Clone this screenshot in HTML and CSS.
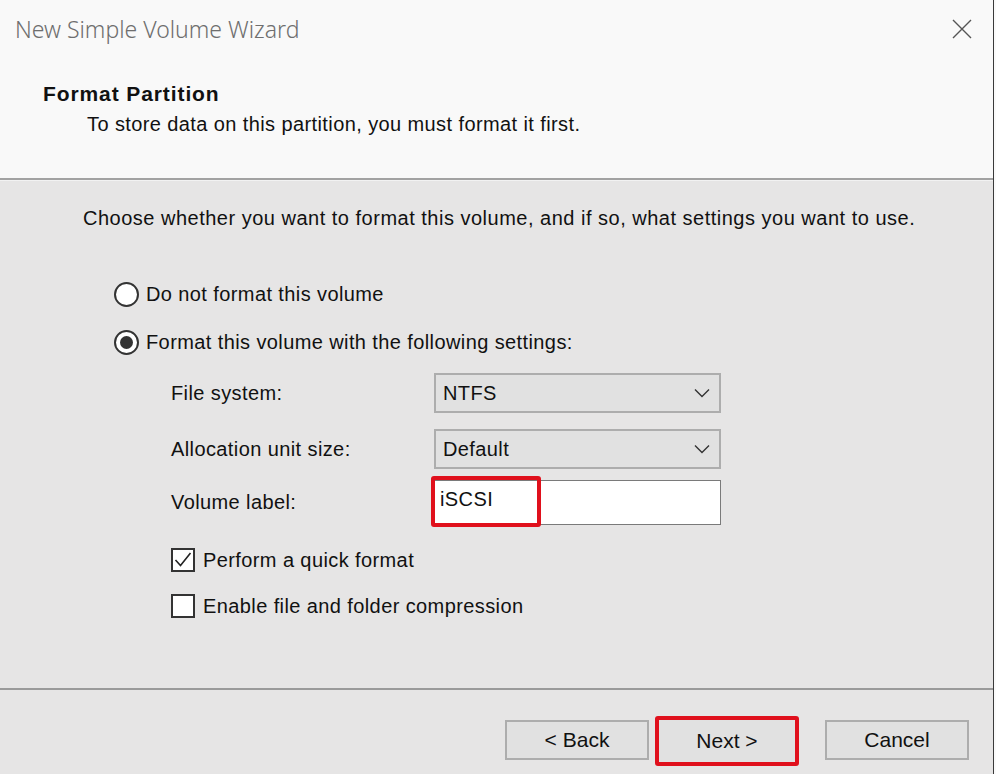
FILE: index.html
```html
<!DOCTYPE html>
<html lang="en">
  <head>
    <meta charset="UTF-8" />
    <title>New Simple Volume Wizard</title>
    <link rel="stylesheet" href="styles.css">
  </head>
  <body>
    <div class="window">
      <div class="header">
        <div class="titlebar">
          <span class="title">New Simple Volume Wizard</span>
          <svg class="close" width="20" height="20" viewBox="0 0 20 20">
            <path d="M1 1 L19 19 M19 1 L1 19" stroke="#555" stroke-width="1.4" fill="none" />
          </svg>
        </div>
        <h2 class="page-title">Format Partition</h2>
        <p class="page-desc">To store data on this partition, you must format it first.</p>
      </div>

      <div class="content">
        <p class="intro">Choose whether you want to format this volume, and if so, what settings you want to use.</p>

        <div class="option">
          <span class="radio"></span>
          <span>Do not format this volume</span>
        </div>
        <div class="option">
          <span class="radio checked"></span>
          <span>Format this volume with the following settings:</span>
        </div>

        <div class="settings">
          <div class="field">
            <span class="label">File system:</span>
            <div class="select">
              <span>NTFS</span>
              <svg width="16" height="10" viewBox="0 0 16 10">
                <polyline points="1,1.5 8,8.5 15,1.5" stroke="#333" stroke-width="1.4" fill="none" />
              </svg>
            </div>
          </div>
          <div class="field">
            <span class="label">Allocation unit size:</span>
            <div class="select">
              <span>Default</span>
              <svg width="16" height="10" viewBox="0 0 16 10">
                <polyline points="1,1.5 8,8.5 15,1.5" stroke="#333" stroke-width="1.4" fill="none" />
              </svg>
            </div>
          </div>
          <div class="field field-label">
            <span class="label">Volume label:</span>
            <div class="textbox">
              <span>iSCSI</span>
              <span class="mark"></span>
            </div>
          </div>

          <div class="check-row">
            <span class="checkbox">
              <svg width="20" height="20" viewBox="0 0 20 20">
                <polyline points="2.5,10 7.5,15.5 17.5,3" stroke="#222" stroke-width="1.6" fill="none" />
              </svg>
            </span>
            <span>Perform a quick format</span>
          </div>
          <div class="check-row">
            <span class="checkbox"></span>
            <span>Enable file and folder compression</span>
          </div>
        </div>
      </div>

      <div class="footer">
        <button class="btn">&lt; Back</button>
        <span class="btn-mark"><button class="btn btn-next">Next &gt;</button></span>
        <button class="btn btn-cancel">Cancel</button>
      </div>
    </div>
  </body>
</html>
```

FILE: styles.css
```css
* {
  margin: 0;
  padding: 0;
  box-sizing: border-box;
}
body {
  width: 996px;
  height: 774px;
  overflow: hidden;
  background: #fafafa;
  font-family: 'Liberation Sans', Arial, sans-serif;
  color: #111;
}
.window {
  width: 994px;
  height: 774px;
  border-right: 1px solid #3a3a3a;
  background: #e6e5e5;
}
.header {
  height: 180px;
  background: #f9f9f9;
  border-bottom: 2px solid #a2a2a2;
}
.titlebar {
  display: flex;
  justify-content: space-between;
  align-items: center;
  height: 58px;
  padding: 0 21px 0 15px;
}
.title {
  font-family: 'Noto Sans', 'Open Sans', sans-serif;
  font-weight: 300;
  font-size: 23px;
  color: #6e6e6e;
}
.page-title {
  margin: 22px 0 0 43px;
  font-size: 21px;
  font-weight: bold;
  letter-spacing: 0.9px;
  line-height: 28px;
  color: #111;
}
.page-desc {
  margin: 3px 0 0 87px;
  font-size: 20px;
  letter-spacing: 0.4px;
  line-height: 26px;
}
.content {
  height: 508px;
  padding: 25px 0 0 83px;
  border-top: 1px solid #f2f2f2;
  font-size: 20px;
  letter-spacing: 0.4px;
}
.intro {
  line-height: 24px;
  margin-bottom: 40px;
  letter-spacing: 0.5px;
}
.option {
  display: flex;
  align-items: center;
  gap: 7px;
  height: 48px;
  margin-left: 31px;
}
.radio {
  width: 25px;
  height: 25px;
  border: 2px solid #333;
  border-radius: 50%;
  background: #fff;
  display: flex;
  align-items: center;
  justify-content: center;
}
.radio.checked::after {
  content: '';
  width: 13px;
  height: 13px;
  border-radius: 50%;
  background: #333;
}
.settings {
  margin: 7px 0 0 88px;
}
.field {
  display: flex;
  align-items: center;
  height: 40px;
  margin-bottom: 16px;
}
.field-label {
  height: 45px;
  margin-top: -5px;
  margin-bottom: 23px;
}
.label {
  width: 263px;
}
.select {
  width: 287px;
  height: 40px;
  display: flex;
  align-items: center;
  justify-content: space-between;
  padding: 0 9px 0 7px;
  background: #e1e1e1;
  border: 2px solid #adadad;
}
.textbox {
  position: relative;
  width: 287px;
  height: 45px;
  display: flex;
  align-items: center;
  padding: 0 0 6px 5px;
  background: #fff;
  border: 1.5px solid #7a7a7a;
}
.mark {
  position: absolute;
  left: -4px;
  top: -5px;
  width: 110px;
  height: 51px;
  border: 4px solid #e0101c;
  border-radius: 3px;
}
.check-row {
  display: flex;
  align-items: center;
  gap: 8px;
  height: 24px;
  margin-bottom: 22px;
}
.checkbox {
  width: 24px;
  height: 24px;
  border: 2px solid #333;
  background: #fff;
  display: flex;
  align-items: center;
  justify-content: center;
}
.footer {
  height: 86px;
  border-top: 2px solid #9a9a9a;
  display: flex;
  align-items: flex-start;
  padding: 26px 0 0 505px;
}
.btn {
  width: 144px;
  height: 40px;
  margin-top: 4px;
  background: #e1e1e1;
  border: 2px solid #adadad;
  font-family: 'Liberation Sans', Arial, sans-serif;
  font-size: 21px;
  color: #111;
}
.btn-mark {
  display: block;
  margin-left: 6px;
  border: 4px solid #e0101c;
  border-radius: 3px;
}
.btn-next {
  width: 136px;
  height: 42px;
  margin-top: 0;
  border: none;
}
.btn-cancel {
  margin-left: 26px;
}
```
